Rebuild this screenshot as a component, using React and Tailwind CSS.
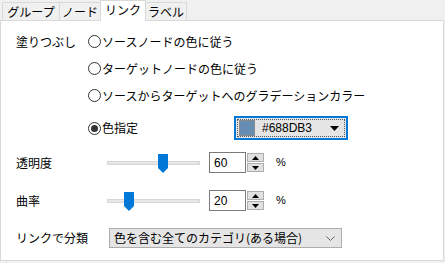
import React from "react";

const JP = { fontFamily: '"Noto Sans CJK JP", "Noto Sans", sans-serif' };

function Radio({ checked }) {
  return (
    <span className="w-[13px] h-[13px] rounded-full border border-[#333333] bg-white flex items-center justify-center shrink-0">
      {checked && <span className="w-[7px] h-[7px] rounded-full bg-[#333333]" />}
    </span>
  );
}

function RadioRow({ label, checked }) {
  return (
    <div className="flex items-center h-[27px]">
      <Radio checked={checked} />
      <span className="ml-px text-[12px] leading-none text-black">{label}</span>
    </div>
  );
}

function Slider({ pos }) {
  return (
    <div className="relative w-[93px] h-[20px] flex items-center">
      <div className="w-full h-[4px] bg-[#e7e7e7] border border-[#d6d6d6]" />
      <svg
        className="absolute top-[1px]"
        style={{ left: pos }}
        width="10"
        height="19"
        viewBox="0 0 10 19"
      >
        <path d="M0 0 H10 V14 L5 19 L0 14 Z" fill="#0078d7" />
      </svg>
    </div>
  );
}

function Spin({ value }) {
  return (
    <div className="flex items-stretch h-[21px]">
      <div
        className="w-[37px] h-full border border-[#7a7a7a] bg-white flex items-center pl-[4px] text-[12px] text-black"
        style={{ fontFamily: '"Liberation Sans", sans-serif' }}
      >
        {value}
      </div>
      <div className="ml-px w-[17px] flex flex-col justify-between py-[1px]">
        <div className="h-[9px] border border-[#adadad] bg-[#e1e1e1] flex items-center justify-center">
          <svg width="7" height="4" viewBox="0 0 7 4">
            <path d="M3.5 0 L7 4 H0 Z" fill="#000" />
          </svg>
        </div>
        <div className="h-[9px] border border-[#adadad] bg-[#e1e1e1] flex items-center justify-center">
          <svg width="7" height="4" viewBox="0 0 7 4">
            <path d="M0 0 H7 L3.5 4 Z" fill="#000" />
          </svg>
        </div>
      </div>
    </div>
  );
}

function SliderRow({ label, pos, value }) {
  return (
    <div className="flex items-center h-[21px]">
      <span className="w-[91px] text-[12px] leading-none text-black">{label}</span>
      <Slider pos={pos} />
      <div className="ml-[9px]">
        <Spin value={value} />
      </div>
      <span
        className="ml-[12px] text-[11px] text-black"
        style={{ fontFamily: '"Liberation Sans", sans-serif' }}
      >
        %
      </span>
    </div>
  );
}

export default function App() {
  return (
    <div className="w-[445px] h-[263px] bg-[#f0f0f0] flex flex-col overflow-hidden" style={JP}>
      {/* Tabs */}
      <div className="flex items-start h-[20px] pl-[2px]">
        <div className="mt-[2px] h-[18px] w-[57px] border-l border-t border-[#d9d9d9] bg-[#f0f0f0] flex items-center justify-center text-[12px] leading-none text-black">
          グループ
        </div>
        <div className="mt-[2px] h-[18px] w-[41px] border-l border-t border-[#d9d9d9] bg-[#f0f0f0] flex items-center justify-center text-[12px] leading-none text-black">
          ノード
        </div>
        <div className="relative z-10 h-[21px] w-[46px] border-l border-t border-r border-[#d9d9d9] bg-white flex items-center justify-center pb-[2px] text-[12px] leading-none text-black">
          リンク
        </div>
        <div className="mt-[2px] h-[18px] w-[41px] border-t border-r border-[#d9d9d9] bg-[#f0f0f0] flex items-center justify-center text-[12px] leading-none text-black">
          ラベル
        </div>
      </div>

      {/* Panel */}
      <div className="w-[444px] h-[241px] border border-[#d9d9d9] bg-white pl-[15px] pt-[7px] flex flex-col">
        <div className="flex">
          <div className="w-[72px] h-[27px] flex items-center text-[12px] leading-none text-black">
            塗りつぶし
          </div>
          <div className="flex flex-col">
            <RadioRow label="ソースノードの色に従う" />
            <RadioRow label="ターゲットノードの色に従う" />
            <RadioRow label="ソースからターゲットへのグラデーションカラー" />
            <div className="flex items-center h-[24px] mt-[7px]">
              <div className="w-[146px] flex items-center">
                <Radio checked />
                <span className="ml-px text-[12px] leading-none text-black">色指定</span>
              </div>
              <div className="w-[114px] h-[24px] border-2 border-[#0078d7] bg-[#e5e5e5] p-px">
                <div className="w-full h-full border border-dotted border-[#555555] flex items-center pl-[1px] pr-[5px]">
                  <span className="w-[16px] h-[16px] bg-[#688db3] border border-[#8a8a8a]" />
                  <span
                    className="ml-[7px] text-[12px] text-black leading-none"
                    style={{ fontFamily: '"Liberation Sans", sans-serif' }}
                  >
                    #688DB3
                  </span>
                  <svg className="ml-auto" width="9" height="5" viewBox="0 0 9 5">
                    <path d="M0 0 H9 L4.5 5 Z" fill="#000" />
                  </svg>
                </div>
              </div>
            </div>
          </div>
        </div>

        <div className="mt-[12px]">
          <SliderRow label="透明度" pos={51} value="60" />
        </div>
        <div className="mt-[17px]">
          <SliderRow label="曲率" pos={17} value="20" />
        </div>

        <div className="mt-[17px] flex items-center h-[20px]">
          <span className="w-[93px] text-[12px] leading-none text-black">リンクで分類</span>
          <div className="w-[233px] h-[20px] border border-[#adadad] bg-[#e5e5e5] flex items-center pl-[4px] pr-[6px]">
            <span className="text-[12px] leading-none text-black">色を含む全てのカテゴリ(ある場合)</span>
            <svg className="ml-auto" width="9" height="5" viewBox="0 0 9 5">
              <path d="M0.5 0.5 L4.5 4.5 L8.5 0.5" fill="none" stroke="#606060" strokeWidth="1" />
            </svg>
          </div>
        </div>
      </div>
    </div>
  );
}
